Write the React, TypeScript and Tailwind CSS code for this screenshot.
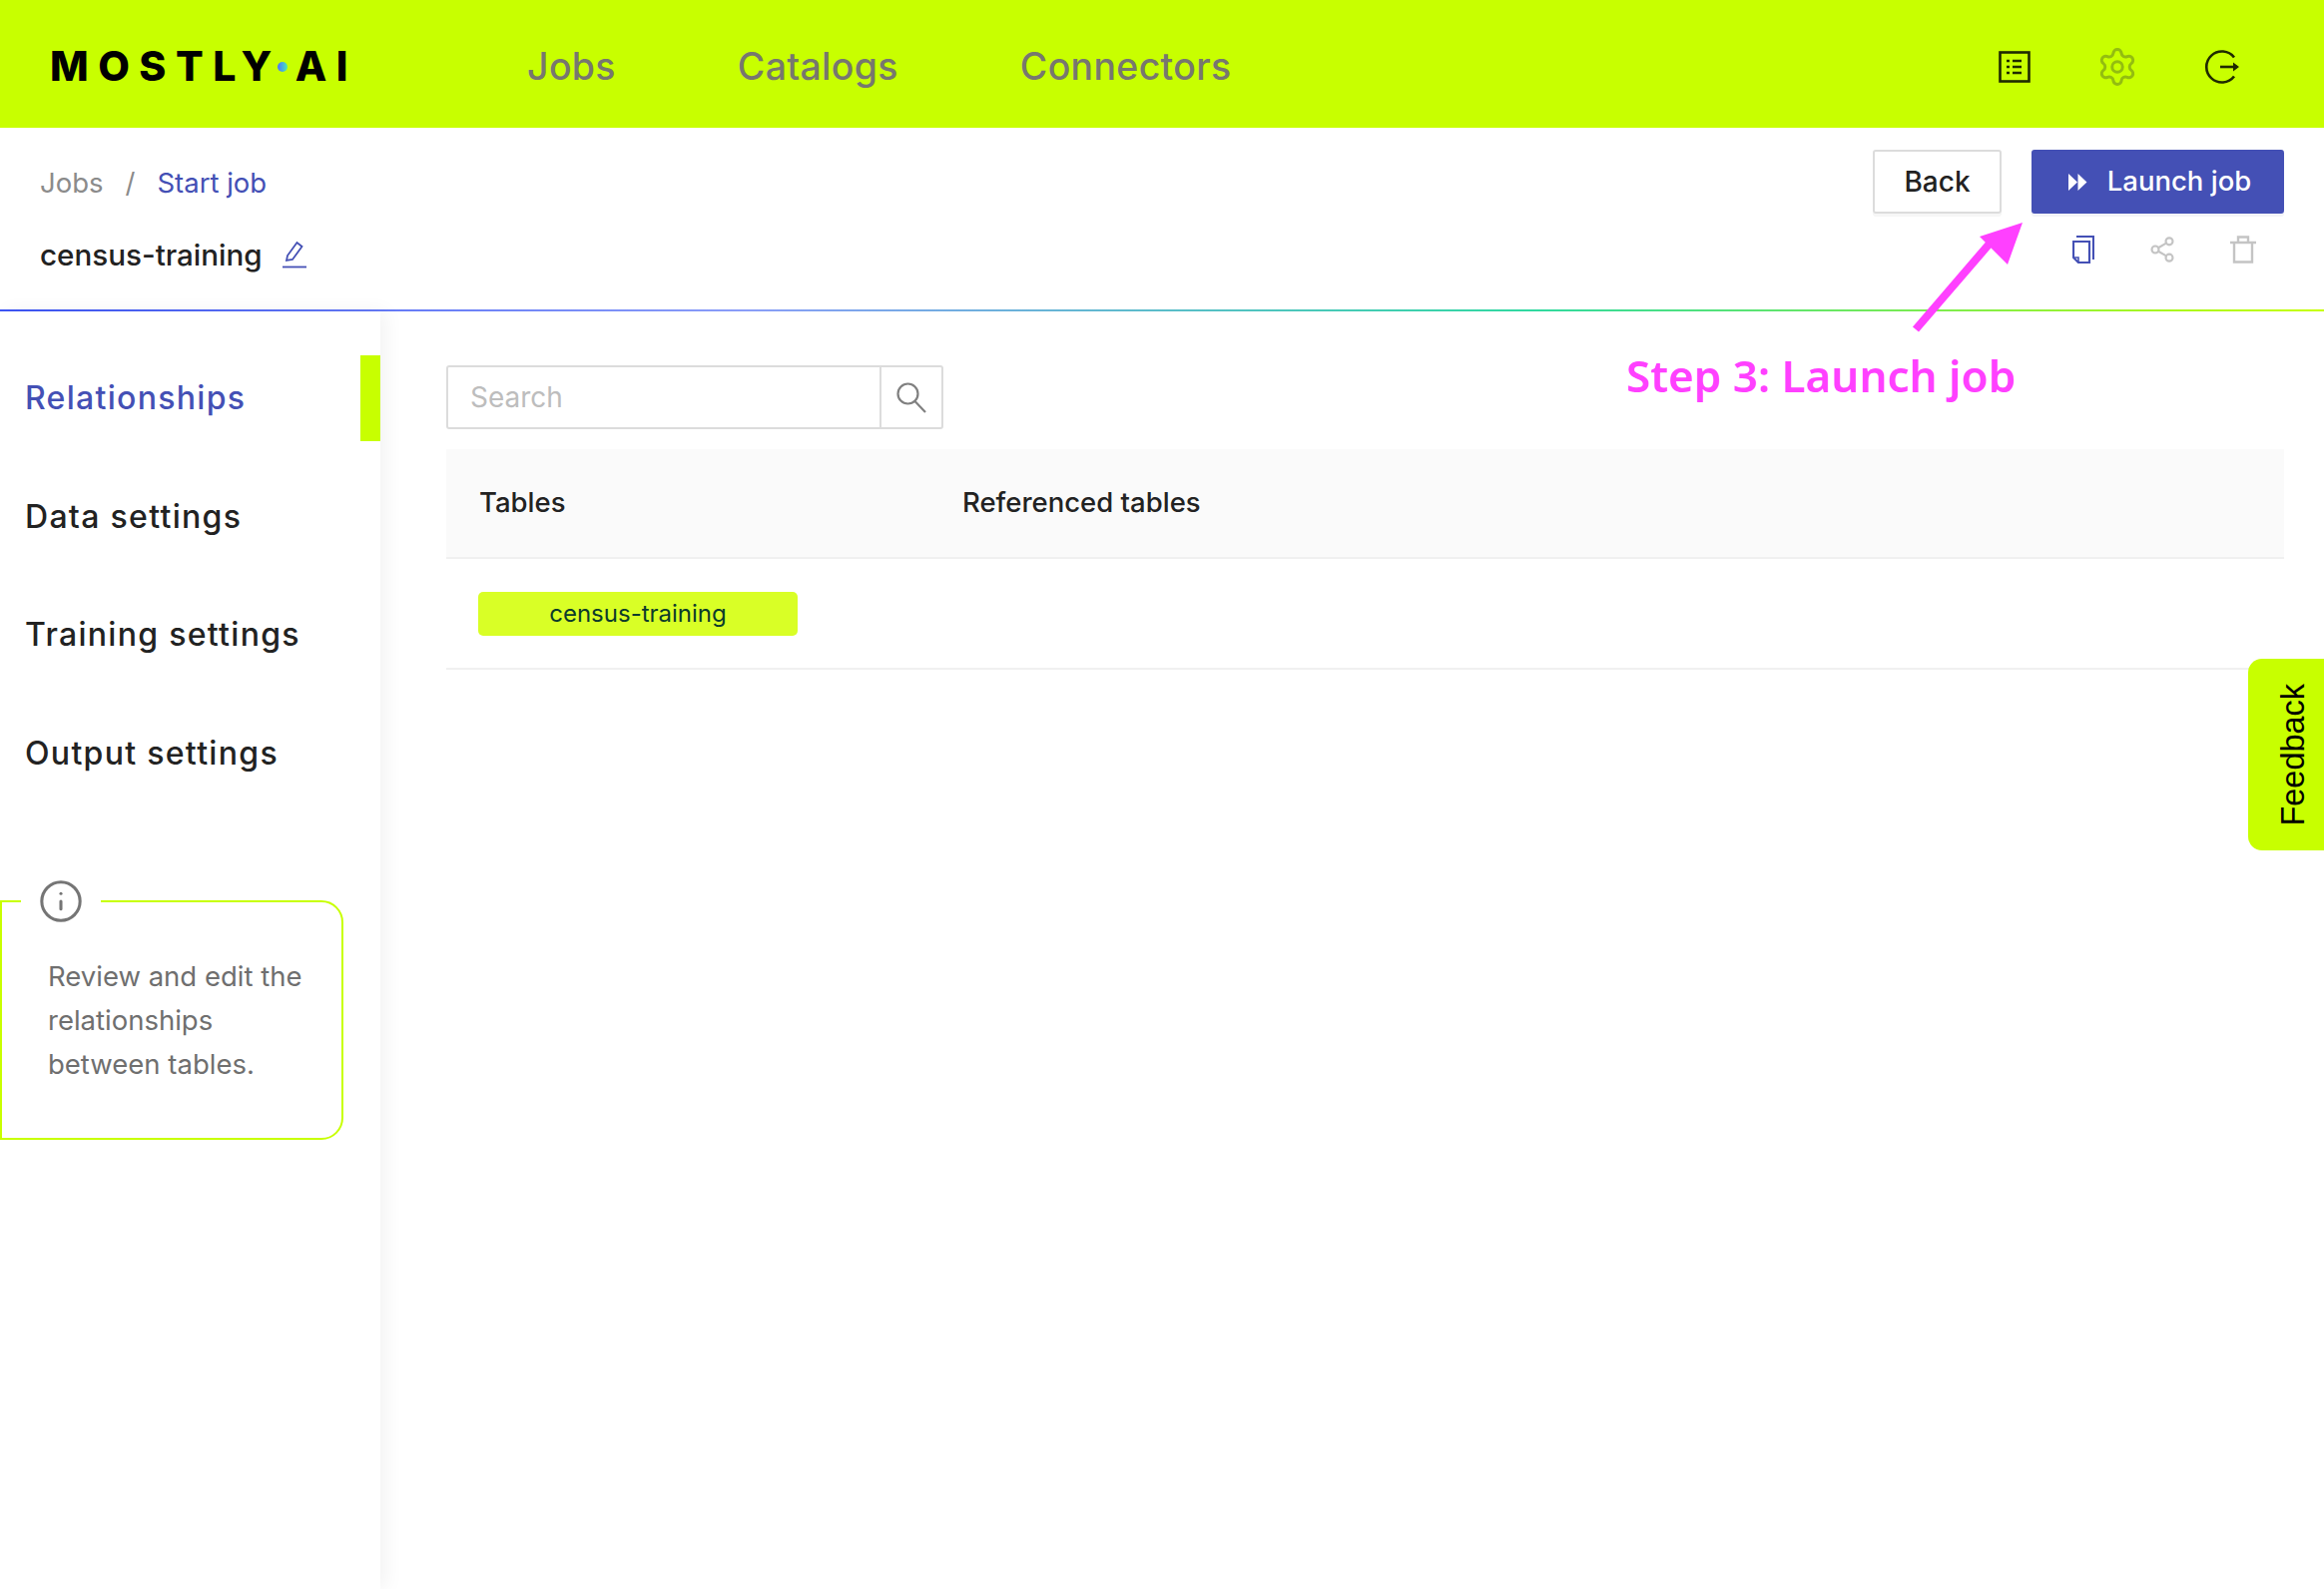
import { Info, Settings, Share2 } from "lucide-react";

const navLinks = ["Jobs", "Catalogs", "Connectors"];
const steps = ["Relationships", "Data settings", "Training settings", "Output settings"];

function Logo() {
  return (
    <div className="flex items-center font-['Inter',sans-serif] text-[41px] font-extrabold leading-none text-black">
      <span className="tracking-[9.5px]">MOSTLY</span>
      <span className="ml-[-4px] mr-[8px] h-[10px] w-[10px] rounded-full bg-gradient-to-r from-[#4f6cff] to-[#53e6a8]" />
      <span className="tracking-[9.5px]">AI</span>
    </div>
  );
}

function ListDocIcon() {
  return (
    <svg width="32" height="32" viewBox="0 0 32 32" fill="none" stroke="#1f2a00" strokeWidth="2.6">
      <rect x="1.5" y="1.5" width="29" height="29" />
      <path d="M14 10h9M14 16h9M14 22h9" />
      <path d="M8 10h3M8 16h3M8 22h3" />
    </svg>
  );
}

function LogoutIcon() {
  return (
    <svg width="36" height="36" viewBox="0 0 36 36" fill="none" stroke="#1f2a00" strokeWidth="2.6">
      <path d="M30 8.5A15.5 15.5 0 1 0 30 27.5" />
      <path d="M16 18h17" />
      <path d="M29 13.5l6 4.5-6 4.5z" fill="#1f2a00" stroke="none" />
    </svg>
  );
}

function CopyIcon() {
  return (
    <svg width="22" height="28" viewBox="0 0 22 28" fill="none" stroke="#4450b5" strokeWidth="2.2">
      <path d="M4 1h17v23" />
      <path d="M1 6h16v21H6l-5-5z" />
      <path d="M1 22h5v5" strokeWidth="1.6" />
    </svg>
  );
}

function TrashIcon() {
  return (
    <svg width="26" height="28" viewBox="0 0 26 28" fill="none" stroke="#c4c4c4" strokeWidth="2.4">
      <path d="M0 7h26M4 7v19.5h18V7M8 7V1.5h10V7" />
    </svg>
  );
}

function PenIcon() {
  return (
    <svg width="26" height="28" viewBox="0 0 26 28" fill="none" stroke="#4450b5" strokeWidth="1.8">
      <path d="M5 20l1-5L15.5 2l5 4L11 19z" />
      <path d="M1 26.5h24" />
    </svg>
  );
}

function ForwardIcon() {
  return (
    <svg width="19" height="17" viewBox="0 0 18 16" fill="#ffffff">
      <path d="M0 0l8.5 8L0 16zM9 0l8.5 8L9 16z" />
    </svg>
  );
}

function SearchIcon() {
  return (
    <svg width="32" height="32" viewBox="0 0 32 32" fill="none" stroke="#808080" strokeWidth="2.2">
      <circle cx="12.5" cy="12.5" r="10" />
      <path d="M19.5 20l10.5 11" />
    </svg>
  );
}

function StepArrow() {
  return (
    <svg
      className="absolute left-[1900px] top-[215px] pointer-events-none"
      width="140"
      height="125"
      viewBox="0 0 140 125"
      fill="#ff40ff"
    >
      <path d="M126 8L111 50 83 22z" />
      <path d="M19 115l80-93" stroke="#ff40ff" strokeWidth="8" fill="none" />
    </svg>
  );
}

export default function App() {
  return (
    <div className="relative flex h-screen flex-col overflow-hidden bg-white font-['Inter',sans-serif]">
      {/* Top bar */}
      <header className="flex h-[128px] shrink-0 items-center bg-[#c8ff00] pl-[50px] pr-[84px] pt-[5px]">
        <Logo />
        <nav className="ml-[170px] mt-[2px] flex gap-[122px] text-[37.5px] font-medium tracking-[0.3px] text-[#77776f]">
          {navLinks.map((l) => (
            <a key={l}>{l}</a>
          ))}
        </nav>
        <div className="ml-auto flex items-center gap-[66px]">
          <ListDocIcon />
          <Settings className="h-[42px] w-[42px] text-[#93bd10]" strokeWidth={1.7} />
          <LogoutIcon />
        </div>
      </header>

      {/* Sub header */}
      <div className="flex h-[182px] shrink-0 justify-between pl-[40px] pr-[40px] pt-[22px]">
        <div>
          <div className="mt-[16px] flex items-center text-[27.5px] leading-[34px] text-[#8b8b8b]">
            <span>Jobs</span>
            <span className="mx-[22px]">/</span>
            <span className="text-[#4450b5]">Start job</span>
          </div>
          <div className="mt-[37px] flex items-center gap-[19px] text-[29.6px] font-medium leading-[36px] text-[#222]">
            census-training
            <PenIcon />
          </div>
        </div>
        <div className="flex flex-col items-end">
          <div className="flex gap-[30px]">
            <button className="h-[64px] w-[129px] rounded-[3px] border-2 border-[#dcdcdc] text-[28px] font-medium text-[#222] shadow-[0_3px_0_#f6f6f6]">
              Back
            </button>
            <button className="flex h-[64px] w-[253px] items-center justify-center gap-[20px] rounded-[3px] bg-[#4450b5] pl-[4px] text-[27.5px] font-medium text-white shadow-[0_3px_0_#f3f4f8]">
              <ForwardIcon />
              Launch job
            </button>
          </div>
          <div className="mr-[28px] mt-[22px] flex items-center gap-[54px]">
            <CopyIcon />
            <Share2 className="h-[28px] w-[28px] text-[#c4c4c4]" strokeWidth={1.8} />
            <TrashIcon />
          </div>
        </div>
      </div>

      <div className="h-[2px] shrink-0 bg-[linear-gradient(90deg,#3d55f5_0%,#8a9df8_32%,#30d9a0_66%,#c8ff00_100%)]" />

      {/* Body */}
      <div className="flex min-h-0 flex-1">
        <aside className="relative w-[381px] shrink-0 pt-[44px] shadow-[6px_0_18px_rgba(0,0,0,0.05)]">
          <div className="flex flex-col">
            {steps.map((s, i) => (
              <div
                key={s}
                className="relative flex h-[86px] items-center pl-[25px] text-[32px] font-medium tracking-[1.3px] text-[#222] [&:not(:first-child)]:mt-[32.5px]"
              >
                <span className={i === 0 ? "text-[#4450b5]" : ""}>{s}</span>
                {i === 0 && <span className="absolute right-0 top-0 h-[86px] w-[20px] bg-[#c8ff00]" />}
              </div>
            ))}
          </div>
          <div className="relative mt-[104px] h-[240px] w-[344px] rounded-r-[22px] border-2 border-[#c8ff00] pl-[46px] pr-[30px] pt-[52px] text-[27.5px] leading-[44px] text-[#6f6f6f]">
            <span className="absolute left-[19px] top-[-24px] flex w-[80px] justify-center bg-white">
              <Info className="h-[46px] w-[46px] text-[#757575]" strokeWidth={1.6} />
            </span>
            Review and edit the relationships between tables.
          </div>
        </aside>

        <main className="min-w-0 flex-1 pl-[66px] pr-[40px] pt-[54px]">
          <div className="flex h-[64px] w-[498px] rounded-[3px] border-2 border-[#dcdcdc]">
            <div className="flex flex-1 items-center pl-[22px] text-[28px] text-[#bdbdbd]">Search</div>
            <div className="flex w-[62px] items-center justify-center border-l-2 border-[#dcdcdc]">
              <SearchIcon />
            </div>
          </div>
          <div className="mt-[20px] flex h-[110px] items-center border-b-2 border-[#f0f0f0] bg-[#fafafa] pl-[33px] text-[27.5px] font-medium text-[#222]">
            <span className="w-[484px]">Tables</span>
            <span>Referenced tables</span>
          </div>
          <div className="flex h-[111px] items-center border-b-2 border-[#f0f0f0] pl-[32px]">
            <span className="flex h-[44px] w-[320px] items-center justify-center rounded-[5px] bg-[#d9ff26] text-[24px] text-[#0b3b2b]">
              census-training
            </span>
          </div>
        </main>
      </div>

      {/* Annotation drawn over the screenshot */}
      <StepArrow />
      <div className="absolute left-[1629px] top-[354px] font-['Noto_Sans',sans-serif] text-[44px] font-semibold leading-none text-[#ff40ff]">
        Step 3: Launch job
      </div>

      {/* Feedback tab */}
      <div className="absolute right-0 top-[660px] flex h-[192px] w-[76px] items-center justify-center rounded-l-[14px] bg-[#c8ff00] pl-[14px]">
        <span className="rotate-[-90deg] font-['Liberation_Sans',sans-serif] text-[32.5px] leading-none whitespace-nowrap text-black">
          Feedback
        </span>
      </div>
    </div>
  );
}
